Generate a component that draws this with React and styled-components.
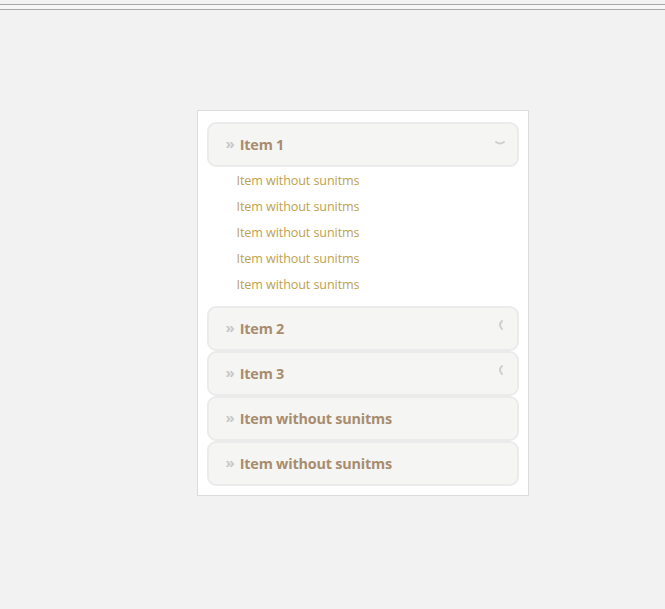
import React from "react";
import styled, { createGlobalStyle } from "styled-components";

const Global = createGlobalStyle`
  html, body {
    margin: 0;
    padding: 0;
    background: #f2f2f2;
    font-family: "Open Sans", "Noto Sans", sans-serif;
  }
`;

const Page = styled.div`
  min-height: 609px;
  background: #f2f2f2;
`;

const TopBar = styled.div`
  height: 6px;
  margin-top: 4px;
  border-top: 1px solid #a8a8a8;
  border-bottom: 1px solid #a8a8a8;
  box-sizing: border-box;
  background: #f7f7f7;
`;

const Stage = styled.div`
  display: flex;
  justify-content: center;
  padding: 100px 0 0 60px;
  box-sizing: border-box;
  width: 665px;
`;

const Panel = styled.div`
  width: 332px;
  box-sizing: border-box;
  background: #fff;
  border: 1px solid #dcdcdc;
  padding: 11px 9px 9px 9px;
  display: flex;
  flex-direction: column;
`;

const Header = styled.div`
  height: 45px;
  box-sizing: border-box;
  background: #f5f5f4;
  border: 2px solid #ebebeb;
  border-radius: 9px;
  display: flex;
  align-items: center;
  padding: 0 11px 0 17px;
  cursor: pointer;
`;

const Bullet = styled.span`
  color: #c8c8c8;
  font-size: 15px;
  font-weight: 700;
  margin-right: 5px;
  line-height: 1;
  transform: translateY(-1px);
`;

const Title = styled.span`
  flex: 1;
  color: #a88c6e;
  font-size: 14.4px;
  font-weight: 700;
  letter-spacing: -0.2px;
`;

const Arrow = styled.svg`
  width: 12px;
  height: 12px;
  margin-top: ${(p) => (p.$open ? "-4px" : "-8px")};
`;

const SubList = styled.ul`
  list-style: none;
  margin: 0;
  padding: 0 0 9px 30px;
`;

const SubItem = styled.li`
  height: 26px;
  display: flex;
  align-items: center;
  color: #bea250;
  font-size: 12.6px;
  letter-spacing: -0.1px;
`;

const Chevron = ({ open }) => (
  <Arrow $open={open} viewBox="0 0 12 12">
    {open ? (
      <path d="M2 5 Q6 8 10 5" stroke="#cfcfcf" strokeWidth="2" fill="none" strokeLinecap="round" />
    ) : (
      <path d="M8 2 Q4 6 8 10" stroke="#cfcfcf" strokeWidth="2" fill="none" strokeLinecap="round" />
    )}
  </Arrow>
);

const items = [
  { key: "1", title: "Item 1", subs: 5, open: true },
  { key: "2", title: "Item 2", subs: 3, open: false },
  { key: "3", title: "Item 3", subs: 3, open: false },
  { key: "4", title: "Item without sunitms" },
  { key: "5", title: "Item without sunitms" },
];

const App = () => {
  return (
    <Page>
      <Global />
      <TopBar />
      <Stage>
        <Panel>
          {items.map((item) => (
            <React.Fragment key={item.key}>
              <Header>
                <Bullet>»</Bullet>
                <Title>{item.title}</Title>
                {item.subs ? <Chevron open={item.open} /> : null}
              </Header>
              {item.open && (
                <SubList>
                  {Array.from({ length: item.subs }).map((_, i) => (
                    <SubItem key={i}>Item without sunitms</SubItem>
                  ))}
                </SubList>
              )}
            </React.Fragment>
          ))}
        </Panel>
      </Stage>
    </Page>
  );
};

export default App;
